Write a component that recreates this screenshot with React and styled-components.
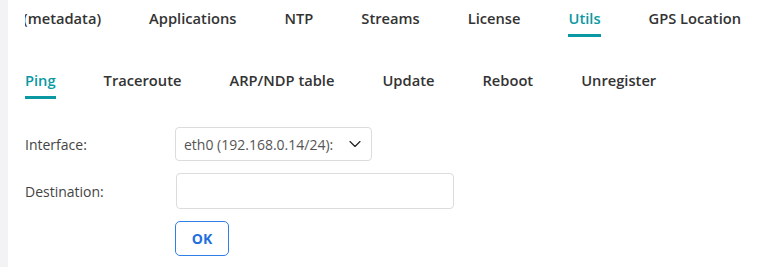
import styled, { createGlobalStyle } from "styled-components";
import { ChevronDown } from "lucide-react";

const GlobalStyle = createGlobalStyle`
  body {
    margin: 0;
    background: #fff;
    font-family: "Open Sans", "Noto Sans", sans-serif;
    color: #333;
  }
`;

const topTabs = ["(metadata)", "Applications", "NTP", "Streams", "License", "Utils", "GPS Location"];
const subTabs = ["Ping", "Traceroute", "ARP/NDP table", "Update", "Reboot", "Unregister"];

export default function App() {
  return (
    <Page>
      <GlobalStyle />
      <Strip />
      <Main>
        <TabBar>
          <TabTrack>
            {topTabs.map((t) => (
              <Tab key={t} $active={t === "Utils"}>
                {t}
              </Tab>
            ))}
          </TabTrack>
        </TabBar>
        <SubBar>
          {subTabs.map((t) => (
            <SubTab key={t} $active={t === "Ping"}>
              {t}
            </SubTab>
          ))}
        </SubBar>
        <Form>
          <Label>Interface:</Label>
          <Select>
            <span>eth0 (192.168.0.14/24):</span>
            <ChevronDown size={20} strokeWidth={1.4} color="#222" />
          </Select>
          <Label>Destination:</Label>
          <Input type="text" />
          <span />
          <OkButton>OK</OkButton>
        </Form>
      </Main>
    </Page>
  );
}

const Page = styled.div`
  display: flex;
  height: 267px;
  overflow: hidden;
`;
const Strip = styled.div`
  width: 8px;
  flex-shrink: 0;
  background: #f3f3f5;
`;
const Main = styled.div`
  flex: 1;
  padding-left: 17px;
  min-width: 0;
`;
const TabBar = styled.div`
  overflow: hidden;
`;
const TabTrack = styled.div`
  display: flex;
  gap: 48px;
  margin-left: -2px;
  white-space: nowrap;
`;
const Tab = styled.div`
  padding: 8px 0 6px;
  line-height: 20px;
  font-size: 14.7px;
  font-weight: 600;
  color: ${(p) => (p.$active ? "#0a98a3" : "#333")};
  border-bottom: 3px solid ${(p) => (p.$active ? "#0a98a3" : "transparent")};
`;
const SubBar = styled.div`
  display: flex;
  gap: 48px;
  margin-top: 33px;
  white-space: nowrap;
`;
const SubTab = styled(Tab)`
  padding: 0 0 6px;
`;
const Form = styled.div`
  display: grid;
  grid-template-columns: 150px auto;
  justify-content: start;
  align-items: center;
  row-gap: 12px;
  margin-top: 28px;
`;
const Label = styled.div`
  font-size: 14px;
  color: #444;
`;
const Select = styled.div`
  width: 197px;
  height: 34px;
  box-sizing: border-box;
  border: 1px solid #dcdcdc;
  border-radius: 4px;
  display: flex;
  align-items: center;
  justify-content: space-between;
  padding: 0 6px 0 8px;
  font-size: 14px;
  color: #555;
`;
const Input = styled.input`
  width: 278px;
  height: 36px;
  box-sizing: border-box;
  margin: 0 0 0 1px;
  border: 1px solid #dcdcdc;
  border-radius: 4px;
  font-family: inherit;
  font-size: 14px;
`;
const OkButton = styled.button`
  width: 54px;
  height: 35px;
  box-sizing: border-box;
  border: 1px solid #2f7fe6;
  border-radius: 5px;
  background: #fff;
  color: #1f6fe0;
  font-family: inherit;
  font-size: 14px;
  font-weight: 700;
  cursor: pointer;
`;
